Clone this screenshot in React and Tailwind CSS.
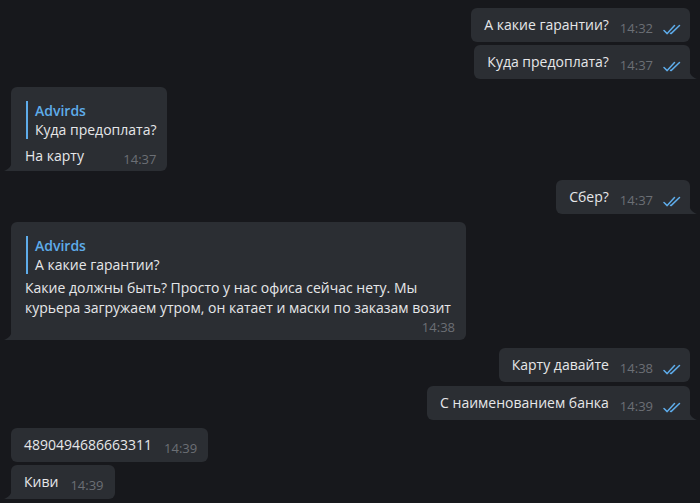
import React from "react";

const Ticks = () => (
  <svg width="20" height="11" viewBox="0 0 20 11" fill="none" className="shrink-0 block">
    <path d="M1 6.5 L4.2 9.6 L11.5 1.5" stroke="#5eacea" strokeWidth="1.5" strokeLinecap="round" strokeLinejoin="round" />
    <path d="M7.5 9.4 L8 9.6 L16.5 1.5" stroke="#5eacea" strokeWidth="1.5" strokeLinecap="round" strokeLinejoin="round" />
  </svg>
);

const TailOut = () => (
  <svg width="8" height="11" viewBox="0 0 8 11" className="absolute -right-[7px] bottom-0">
    <path d="M0 0 C0 6 3 9 8 11 L0 11 Z" fill="#2b2e33" />
  </svg>
);

const TailIn = () => (
  <svg width="8" height="11" viewBox="0 0 8 11" className="absolute -left-[7px] bottom-0">
    <path d="M8 0 C8 6 5 9 0 11 L8 11 Z" fill="#2b2e33" />
  </svg>
);

const Time = ({ t, className = "" }) => (
  <span className={`text-[13px] leading-[20px] text-[#6b6f75] translate-y-[3px] ${className}`}>{t}</span>
);

const Out = ({ text, time, tail }) => (
  <div className="flex justify-end pr-[10px]">
    <div
      className={`relative flex items-center h-[34px] bg-[#2b2e33] pl-[13px] pr-[7px] rounded-md ${
        tail ? "rounded-br-none" : ""
      }`}
    >
      <span className="text-[14px] leading-[20px] text-[#e6e7e9]">{text}</span>
      <Time t={time} className="ml-[11px]" />
      <span className="ml-[10px] translate-y-[4px]">
        <Ticks />
      </span>
      {tail && <TailOut />}
    </div>
  </div>
);

const In = ({ text, time, tail }) => (
  <div className="flex justify-start pl-[11px]">
    <div
      className={`relative flex items-center h-[34px] bg-[#2b2e33] pl-[13px] pr-[11px] rounded-md ${
        tail ? "rounded-bl-none" : ""
      }`}
    >
      <span className="text-[14px] leading-[20px] text-[#e6e7e9]">{text}</span>
      <Time t={time} className="ml-[12px]" />
      {tail && <TailIn />}
    </div>
  </div>
);

const Reply = ({ name, text }) => (
  <div className="flex border-l-2 border-[#5eacea] pl-[7px] ml-[1px]">
    <div className="flex flex-col">
      <span className="text-[14px] leading-[19px] font-semibold text-[#5eacea]">{name}</span>
      <span className="text-[14px] leading-[19px] text-[#e6e7e9]">{text}</span>
    </div>
  </div>
);

export default function App() {
  return (
    <div
      className="w-[700px] h-[503px] overflow-hidden bg-[#17181c] pt-[8px] flex flex-col text-[14px] leading-[20px]"
      style={{ fontFamily: '"Open Sans", "Noto Sans", sans-serif' }}
    >
      <div className="flex flex-col gap-[3px]">
        <Out text="А какие гарантии?" time="14:32" />
        <Out text="Куда предоплата?" time="14:37" tail />
      </div>

      <div className="mt-[8px] flex pl-[11px]">
        <div className="relative bg-[#2b2e33] rounded-md rounded-bl-none pt-[14px] pl-[14px] pr-[11px] pb-[5px]">
          <Reply name="Advirds" text="Куда предоплата?" />
          <div className="flex items-end justify-between mt-[7px]">
            <span className="text-[14px] leading-[20px] text-[#e6e7e9]">На карту</span>
            <Time t="14:37" />
          </div>
          <TailIn />
        </div>
      </div>

      <div className="mt-[9px]">
        <Out text="Сбер?" time="14:37" tail />
      </div>

      <div className="mt-[8px] flex pl-[11px]">
        <div className="relative w-[455px] bg-[#2b2e33] rounded-md rounded-bl-none pt-[14px] pl-[14px] pr-[11px] pb-[3px]">
          <Reply name="Advirds" text="А какие гарантии?" />
          <p className="mt-[4px] text-[14px] leading-[20px] text-[#e6e7e9]">
            Какие должны быть? Просто у нас офиса сейчас нету. Мы
            <br />
            курьера загружаем утром, он катает и маски по заказам возит
          </p>
          <div className="flex justify-end -mt-[1px]">
            <span className="text-[13px] leading-[20px] text-[#6b6f75]">14:38</span>
          </div>
          <TailIn />
        </div>
      </div>

      <div className="mt-[8px] flex flex-col gap-[4px]">
        <Out text="Карту давайте" time="14:38" />
        <Out text="С наименованием банка" time="14:39" tail />
      </div>

      <div className="mt-[8px] flex flex-col gap-[3px]">
        <In text="4890494686663311" time="14:39" />
        <In text="Киви" time="14:39" tail />
      </div>
    </div>
  );
}
